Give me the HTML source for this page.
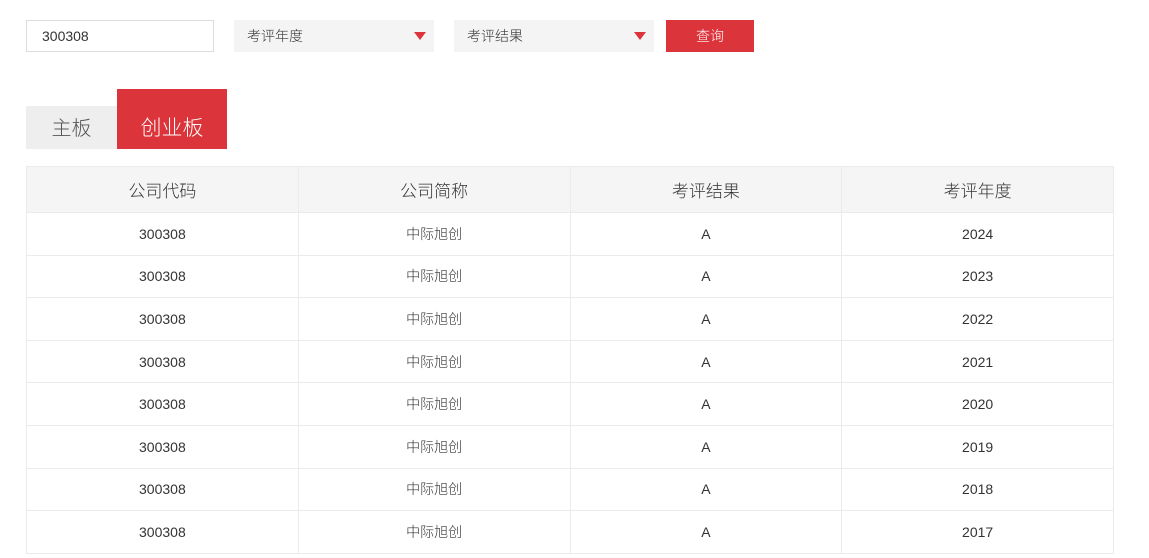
<!DOCTYPE html>
<html><head><meta charset="utf-8"><style>
body{margin:0;background:#fff;font-family:"Liberation Sans","Noto Sans CJK SC",sans-serif;color:#333;width:1149px;height:558px;overflow:hidden;position:relative}
.a{position:absolute;box-sizing:border-box}
.l{font-weight:300}
.inp{left:26px;top:20px;width:188px;height:32px;border:1px solid #ddd;font-size:14px;line-height:30px;padding-left:15px}
.sel{top:20px;width:200px;height:32px;background:#f4f4f4;font-size:14px;line-height:32px;padding-left:13px}
.sel i{position:absolute;right:8px;top:12px;width:0;height:0;border-left:6px solid transparent;border-right:6px solid transparent;border-top:8px solid #dc343b}
.btn{left:666px;top:20px;width:88px;height:32px;background:#dc343b;color:#fff;font-size:14px;line-height:32px;text-align:center}
table{position:absolute;left:26px;top:166px;width:1088px;border-collapse:collapse;font-size:14px}
td,th{border:1px solid #ebebeb;text-align:center;height:41.6px;padding:0;font-weight:normal;width:25%}
th{background:#f5f5f5;font-size:17px;height:45px;font-weight:300}
td:nth-child(2){font-weight:300}
</style></head><body>
<div class="a inp">300308</div>
<div class="a sel l" style="left:234px">考评年度<i></i></div>
<div class="a sel l" style="left:454px">考评结果<i></i></div>
<div class="a btn l">查询</div>
<div class="a l" style="left:26px;top:106px;width:91px;height:43px;background:#eee;font-size:20px;line-height:46px;text-align:center;color:#555">主板</div>
<div class="a l" style="left:117px;top:89px;width:110px;height:60px;background:#dc343b;font-size:21px;line-height:80px;text-align:center;color:#fff">创业板</div>
<table>
<tr><th>公司代码</th><th>公司简称</th><th>考评结果</th><th>考评年度</th></tr>
<tr><td>300308</td><td>中际旭创</td><td>A</td><td>2024</td></tr>
<tr><td>300308</td><td>中际旭创</td><td>A</td><td>2023</td></tr>
<tr><td>300308</td><td>中际旭创</td><td>A</td><td>2022</td></tr>
<tr><td>300308</td><td>中际旭创</td><td>A</td><td>2021</td></tr>
<tr><td>300308</td><td>中际旭创</td><td>A</td><td>2020</td></tr>
<tr><td>300308</td><td>中际旭创</td><td>A</td><td>2019</td></tr>
<tr><td>300308</td><td>中际旭创</td><td>A</td><td>2018</td></tr>
<tr><td>300308</td><td>中际旭创</td><td>A</td><td>2017</td></tr>
</table>
</body></html>
